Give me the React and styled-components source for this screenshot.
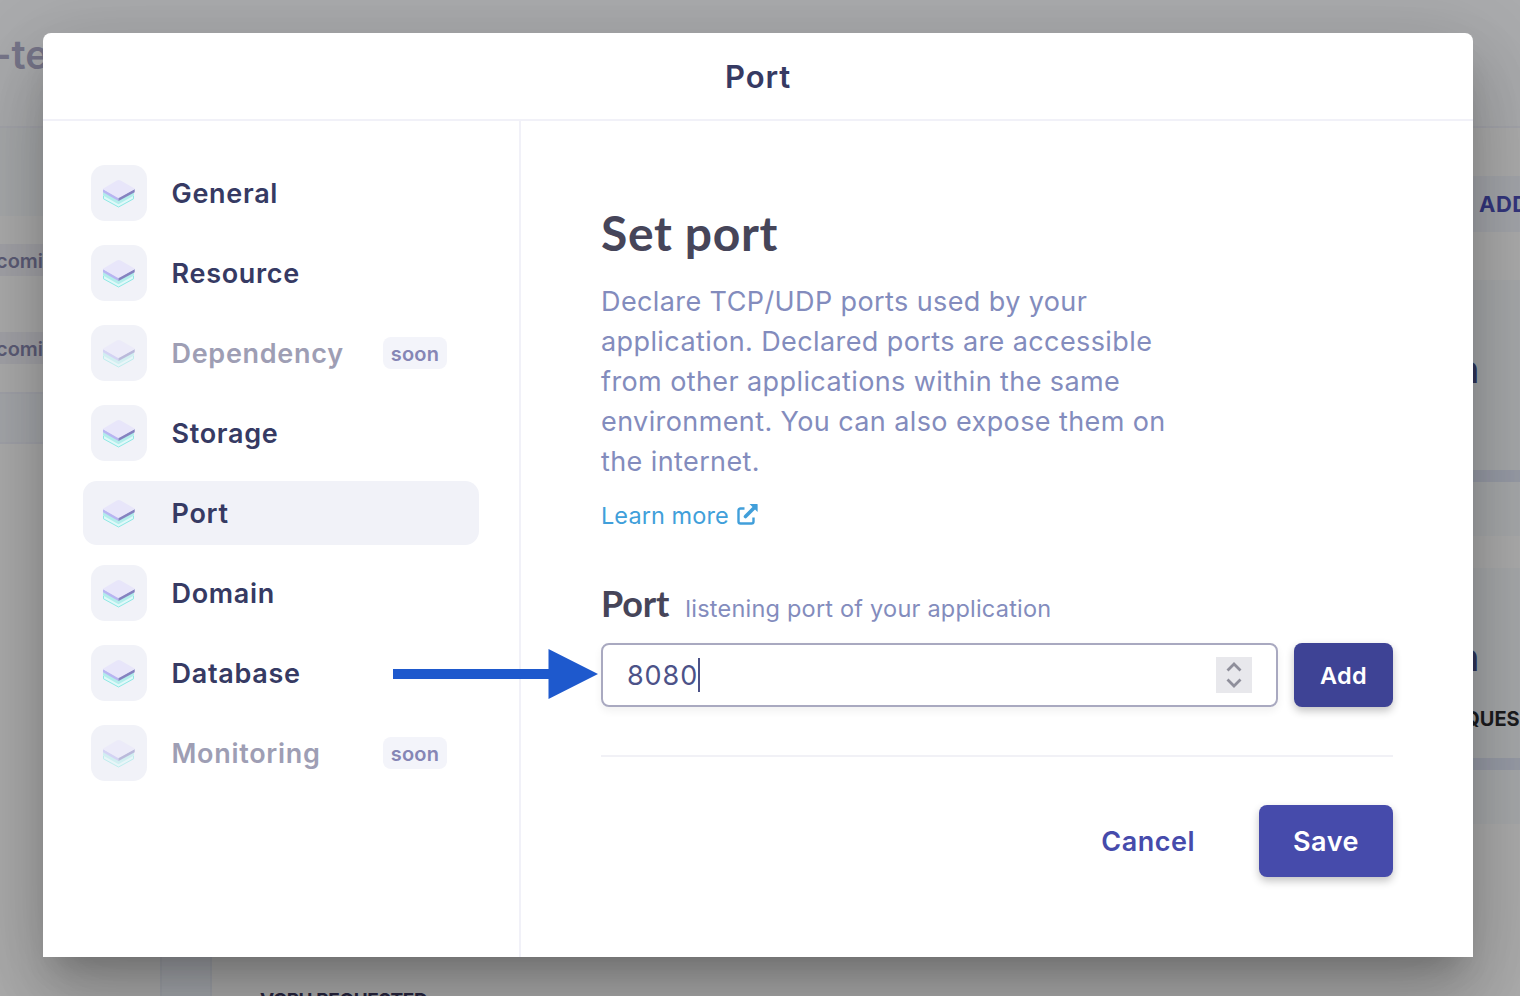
import React from "react";
import styled, { createGlobalStyle } from "styled-components";

const Global = createGlobalStyle`
  *, *::before, *::after { box-sizing: border-box; }
  body { margin: 0; font-family: Inter, "Liberation Sans", sans-serif; background: #adadad; overflow: hidden; }
  h1, h2, h3, p { margin: 0; }
  button { font-family: inherit; border: 0; cursor: pointer; padding: 0; }
`;

const Screen = styled.div`
  position: relative;
  width: 1520px;
  height: 996px;
  overflow: hidden;
`;

const Page = styled.div`
  height: 996px;
  display: flex;
  flex-direction: column;
  background: #adadad;
`;
const PageHeader = styled.div`
  height: 128px;
  flex: none;
  background: #abacae;
  border-bottom: 2px solid #a5a6ac;
`;
const PageTitle = styled.div`
  padding-top: 31px;
  margin-left: -7px;
  font: 600 40px/48px Inter, sans-serif;
  color: #77768a;
`;
const PageBody = styled.div`
  flex: 1;
  min-height: 0;
  display: flex;
`;
const LeftPane = styled.div`
  width: 160px;
  display: flex;
  flex-direction: column;
`;
const Band = styled.div`
  height: ${(p) => p.$h}px;
  flex: none;
  background: ${(p) => p.$bg || "transparent"};
  ${(p) => p.$line && "border-top: 2px solid #a3a4ab; border-bottom: 2px solid #a3a4ab;"}
`;
const Tag = styled.div`
  height: 32px;
  flex: none;
  margin-bottom: ${(p) => p.$gap}px;
  margin-left: -4px;
  background: #a4a4a9;
  color: #5d5d78;
  font: 600 20px/34px Inter, sans-serif;
`;
const CenterPane = styled.div`
  flex: 1;
  display: flex;
`;
const Rail = styled.div`
  width: 52px;
  background: #a6a9ae;
  border: solid #a1a4aa;
  border-width: 0 2px;
`;
const Metric = styled.div`
  align-self: flex-end;
  height: 6px;
  margin-left: 48px;
  white-space: nowrap;
  font: 700 19px/21px Inter, sans-serif;
  letter-spacing: -0.4px;
  color: #28263f;
`;
const RightPane = styled.div`
  width: 47px;
  display: flex;
  flex-direction: column;
  overflow: hidden;
`;
const AddAction = styled.div`
  height: 56px;
  flex: none;
  margin: 48px 0;
  padding-left: 6px;
  background: #a5a7ac;
  color: #34367e;
  white-space: nowrap;
  font: 700 22px/57px Inter, sans-serif;
  letter-spacing: 0.5px;
`;
const Card = styled.div`
  height: 256px;
  flex: none;
  margin-bottom: 32px;
  display: flex;
  flex-direction: column;
  background: #a8aaac;
  overflow: hidden;
`;
const CardValue = styled.div`
  margin: 65px 0 0 -17px;
  font: 600 38px/48px Inter, sans-serif;
  color: #33365a;
`;
const CardLabel = styled.div`
  height: 24px;
  margin: 26px 0 0 -34px;
  white-space: nowrap;
  font: 700 20px/24px Inter, sans-serif;
  color: #1c1c1e;
`;
const CardStripe = styled.div`
  height: 12px;
  margin: auto 0 54px;
  background: #999da8;
`;

const Modal = styled.section`
  position: absolute;
  left: 43px;
  top: 33px;
  width: 1430px;
  height: 924px;
  display: flex;
  flex-direction: column;
  background: #fff;
  border-radius: 8px 8px 0 0;
  box-shadow: 0 22px 30px -14px rgba(0, 0, 0, 0.2), 0 48px 76px 6px rgba(0, 0, 0, 0.14),
    0 18px 92px 16px rgba(0, 0, 0, 0.12);
`;
const ModalHeader = styled.header`
  height: 88px;
  flex: none;
  border-bottom: 2px solid #f1f1f8;
  text-align: center;
`;
const ModalTitle = styled.h1`
  font: 600 31px/88px Inter, sans-serif;
  letter-spacing: 0.9px;
  color: #363a63;
`;
const ModalBody = styled.div`
  flex: 1;
  display: flex;
`;
const Sidebar = styled.nav`
  width: 478px;
  flex: none;
  border-right: 2px solid #f1f1f8;
  padding: 40px 40px 0;
  display: flex;
  flex-direction: column;
  gap: 16px;
`;
const Item = styled.div`
  height: 64px;
  display: flex;
  align-items: center;
  padding: 0 32px 0 8px;
  border-radius: 14px;
  background: ${(p) => (p.$active ? "#f1f2f8" : "transparent")};
`;
const IconTile = styled.div`
  width: 56px;
  height: 56px;
  border-radius: 14px;
  display: flex;
  align-items: center;
  justify-content: center;
  background: #f1f2f8;
`;
const ItemLabel = styled.span`
  margin-left: 24.5px;
  font: 600 27px/41px Inter, sans-serif;
  letter-spacing: 0.7px;
  color: ${(p) => (p.$muted ? "#9e9eb4" : "#363a63")};
`;
const Soon = styled.span`
  margin-left: auto;
  width: 64px;
  height: 32px;
  border-radius: 8px;
  background: #f3f4fa;
  color: #8686b5;
  text-align: center;
  font: 600 20px/34px Inter, sans-serif;
  letter-spacing: 0.2px;
`;

const Content = styled.main`
  flex: 1;
  padding: 80px 80px 0;
  display: flex;
  flex-direction: column;
`;
const Heading = styled.h2`
  font: 700 48px/64px Lato, sans-serif;
  letter-spacing: 0.65px;
  color: #464559;
`;
const Description = styled.p`
  width: 600px;
  margin-top: 17px;
  font: 400 27px/40px Inter, sans-serif;
  letter-spacing: 0.4px;
  color: #838cbd;
`;
const Learn = styled.a`
  margin-top: 18px;
  display: flex;
  align-items: center;
  gap: 8px;
  font: 400 23.5px/32px Inter, sans-serif;
  letter-spacing: 0.08px;
  color: #419fda;

  svg { margin-bottom: 3px; }
`;
const FieldHead = styled.div`
  margin-top: 47px;
  height: 48px;
  display: flex;
  align-items: baseline;
  gap: 16px;
`;
const FieldLabel = styled.h3`
  font: 700 36px/48px Lato, sans-serif;
  letter-spacing: -0.15px;
  color: #464559;
`;
const FieldHint = styled.span`
  font: 400 23.5px/32px Inter, sans-serif;
  letter-spacing: 0.22px;
  color: #838cbd;
`;
const FieldRow = styled.div`
  margin-top: 16px;
  display: flex;
  gap: 16px;
`;
const Field = styled.div`
  width: 677px;
  height: 64px;
  display: flex;
  align-items: center;
  padding: 0 24px;
  border: 2px solid #a9a9c0;
  border-radius: 8px;
  box-shadow: 0 4px 8px rgba(0, 0, 0, 0.06);
`;
const Value = styled.span`
  padding-top: 2px;
  font: 400 27px/40px Inter, sans-serif;
  letter-spacing: 0.9px;
  color: #4c5288;
`;
const Caret = styled.span`
  width: 2px;
  height: 34px;
  background: #4c5288;
`;
const Spinner = styled.span`
  margin-left: auto;
  width: 36px;
  height: 36px;
  display: flex;
  background: #e8e8ec;
`;
const AddButton = styled.button`
  width: 99px;
  height: 64px;
  border-radius: 8px;
  background: #3e4395;
  color: #fff;
  font: 600 23.5px/66px Inter, sans-serif;
  letter-spacing: 0.3px;
  box-shadow: 0 4px 8px rgba(0, 0, 0, 0.24);
`;
const Divider = styled.div`
  height: 2px;
  margin-top: 48px;
  background: #f1f1f6;
`;
const Actions = styled.div`
  margin-top: 48px;
  display: flex;
  justify-content: flex-end;
  gap: 64px;
`;
const CancelButton = styled.button`
  padding-top: 2px;
  background: none;
  color: #464bab;
  font: 600 27px/70px Inter, sans-serif;
  letter-spacing: 0.5px;
`;
const SaveButton = styled.button`
  width: 134px;
  height: 72px;
  padding-top: 2px;
  border-radius: 8px;
  background: #464bab;
  color: #fff;
  font: 600 27px/70px Inter, sans-serif;
  letter-spacing: 0.5px;
  box-shadow: 0 4px 8px rgba(0, 0, 0, 0.24);
`;
const Pointer = styled.svg`
  position: absolute;
  left: 393px;
  top: 649px;
`;

function StackIcon({ faded }) {
  return (
    <svg width="32" height="29" viewBox="0 0 32 29" fill="none" opacity={faded ? 0.5 : 1}>
      <path d="M0 12v8l15.500 8.500L31 20v-8L15.500 19Z" fill="#e0f8f9" />
      <path d="M.5 17v2.800l15 8.200 15-8.200V17" stroke="#8fe8e4" strokeWidth="1" />
      <path d="M0 13v3.500L15.500 25.200 31 16.500V13L15.500 20.500Z" fill="#b2eeeb" />
      <path d="M0 10v3.300l15.500 8.700V18.500Z" fill="#b8b5f2" />
      <path d="M31.700 10v3.300l-16.200 8.700V18.300Z" fill="#8582c0" />
      <path d="M13.800 1.400q1.900-1 3.800 0L31.200 9.300q1 .6 0 1.200L16.800 18.600q-1.300.7-2.600 0L.4 10.600q-1-.6 0-1.200Z" fill="#e8e6fa" />
    </svg>
  );
}

const items = [
  { label: "General" },
  { label: "Resource" },
  { label: "Dependency", soon: true },
  { label: "Storage" },
  { label: "Port", active: true },
  { label: "Domain" },
  { label: "Database" },
  { label: "Monitoring", soon: true },
];

export default function App() {
  return (
    <Screen>
      <Global />
      <Page>
        <PageHeader>
          <PageTitle>-te</PageTitle>
        </PageHeader>
        <PageBody>
          <LeftPane>
            <Band $h={88} $bg="#a8aaac" />
            <Band $h={28} />
            <Tag $gap={56}>comi</Tag>
            <Tag $gap={28}>comi</Tag>
            <Band $h={52} $bg="#a6a8ac" $line />
          </LeftPane>
          <CenterPane>
            <Rail />
            <Metric>VCPU REQUESTED</Metric>
          </CenterPane>
          <RightPane>
            <AddAction>ADD</AddAction>
            <Card>
              <CardValue>n</CardValue>
              <CardStripe />
            </Card>
            <Card>
              <CardValue>n</CardValue>
              <CardLabel>REQUES</CardLabel>
              <CardStripe />
            </Card>
          </RightPane>
        </PageBody>
      </Page>

      <Modal>
        <ModalHeader>
          <ModalTitle>Port</ModalTitle>
        </ModalHeader>
        <ModalBody>
          <Sidebar>
            {items.map((it) => (
              <Item key={it.label} $active={it.active}>
                <IconTile>
                  <StackIcon faded={it.soon} />
                </IconTile>
                <ItemLabel $muted={it.soon}>{it.label}</ItemLabel>
                {it.soon && <Soon>soon</Soon>}
              </Item>
            ))}
          </Sidebar>
          <Content>
            <Heading>Set port</Heading>
            <Description>
              Declare TCP/UDP ports used by your application. Declared ports are accessible from other
              applications within the same environment. You can also expose them on the internet.
            </Description>
            <Learn>
              Learn more
              <svg width="21" height="21" viewBox="0 0 21 21" fill="none">
                <path d="M7.500 4.500H3.500Q1.500 4.500 1.500 6.500V17.500Q1.500 19.500 3.500 19.500H14.500Q16.500 19.500 16.500 17.500V13.500" stroke="#419fda" strokeWidth="2.400" />
                <path d="M8.500 12.500 16.500 4.500" stroke="#419fda" strokeWidth="3.600" strokeLinecap="round" />
                <path d="M12.500 0H20q.6 0 .6.600V8Z" fill="#419fda" />
              </svg>
            </Learn>
            <FieldHead>
              <FieldLabel>Port</FieldLabel>
              <FieldHint>listening port of your application</FieldHint>
            </FieldHead>
            <FieldRow>
              <Field>
                <Value>8080</Value>
                <Caret />
                <Spinner>
                  <svg width="36" height="36" viewBox="0 0 36 36" fill="none" stroke="#8f8f9b" strokeWidth="2.800">
                    <path d="M11.500 13.500 18 7l6.500 6.500M11.500 22.500 18 29l6.500-6.500" />
                  </svg>
                </Spinner>
              </Field>
              <AddButton>Add</AddButton>
            </FieldRow>
            <Divider />
            <Actions>
              <CancelButton>Cancel</CancelButton>
              <SaveButton>Save</SaveButton>
            </Actions>
          </Content>
        </ModalBody>
      </Modal>

      <Pointer width="206" height="50" viewBox="0 0 206 50">
        <path d="M0 20H155.500V0L205 25 155.500 50V30H0Z" fill="#1e59cd" />
      </Pointer>
    </Screen>
  );
}
